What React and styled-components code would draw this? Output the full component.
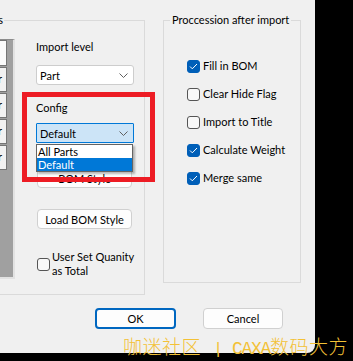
import React from 'react'
import styled, { createGlobalStyle } from 'styled-components'

const GlobalStyle = createGlobalStyle`
  html, body {
    margin: 0;
    padding: 0;
    background: #000;
  }
  body {
    font-family: Lato, "Liberation Sans", sans-serif;
    font-size: 11px;
    color: #000;
  }
`

const Screen = styled.div`
  position: relative;
  width: 353px;
  height: 361px;
  overflow: hidden;
  background: #000;
`

const Dialog = styled.div`
  position: relative;
  width: 315px;
  height: 353px;
  background: #f0f0f0;
  border-bottom-right-radius: 8px;
  overflow: hidden;
  display: flex;
  flex-direction: column;
`

const Panels = styled.div`
  display: flex;
  align-items: flex-start;
  padding-top: 12px;
  margin-left: -100px;
`

const GroupBox = styled.fieldset`
  box-sizing: border-box;
  width: ${p => p.$width}px;
  min-width: 0;
  margin: 0 0 0 ${p => p.$gap || 0}px;
  padding: 0;
  border: 1px solid #dadada;
`

const Legend = styled.legend`
  margin-left: ${p => p.$offset}px;
  padding: 0 ${p => p.$pad}px;
  line-height: 16px;
  white-space: nowrap;
`

/* fixed-width caption box, so only the tail of the left caption shows */
const LegendTail = styled.span`
  display: inline-block;
  width: ${p => p.$width}px;
  text-align: right;
`

const LeftBody = styled.div`
  display: flex;
  height: 266px;
`

const GridList = styled.div`
  box-sizing: border-box;
  width: 114px;
  height: 240px;
  margin-top: 11px;
  padding-right: 6px;
  background: #a0a0a0;
  border-top: 1px solid #8c8c8c;
  border-right: 2px solid #e2e2e2;
  border-bottom: 2px solid #e2e2e2;
  display: flex;
  flex-direction: column;
  align-items: flex-end;
`

const GridCell = styled.div`
  box-sizing: border-box;
  width: 60px;
  height: ${p => (p.$header ? 26 : 25)}px;
  margin-bottom: 1px;
  padding-right: 4px;
  background: ${p => (p.$header ? '#fbfbfb' : '#f2f2f2')};
  border: 1px solid #757575;
  line-height: 22px;
  text-align: right;
`

const Controls = styled.div`
  width: 98px;
  margin-left: 21px;
  display: flex;
  flex-direction: column;
`

const FieldLabel = styled.div`
  margin-top: ${p => p.$top}px;
  line-height: 16px;
`

const Select = styled.div`
  position: relative;
  box-sizing: border-box;
  height: 20px;
  margin-top: ${p => p.$top}px;
  padding: 0 5px 0 3px;
  display: flex;
  align-items: center;
  justify-content: space-between;
  background: ${p => (p.$active ? '#cce4f7' : '#fff')};
  border: 1px solid ${p => (p.$active ? '#0078d7' : '#cdcdcd')};
  border-radius: ${p => (p.$active ? 1 : 3)}px;
`

const DropList = styled.ul`
  position: absolute;
  top: 20px;
  left: -1px;
  z-index: 2;
  box-sizing: border-box;
  width: 97px;
  margin: 0;
  padding: 0;
  list-style: none;
  background: #fff;
  border: 1px solid #646464;
  box-shadow: 2px 2px 2px rgba(0, 0, 0, 0.28);
`

const DropItem = styled.li`
  height: 13px;
  padding-left: 1px;
  line-height: 13px;
  background: ${p => (p.$selected ? '#0078d7' : '#fff')};
  color: ${p => (p.$selected ? '#fff' : '#000')};
`

const PushButton = styled.button`
  box-sizing: border-box;
  width: ${p => p.$width}px;
  height: ${p => p.$height || 20}px;
  margin: ${p => p.$top || 0}px 0 0 ${p => p.$left || 0}px;
  padding: 0;
  font: inherit;
  color: #000;
  background: #fdfdfd;
  border: ${p => (p.$primary ? '2px solid #0067c0' : '1px solid #d0d0d0')};
  border-radius: 4px;
`

const CheckRow = styled.div`
  display: flex;
  align-items: center;
  gap: ${p => p.$gap || 3}px;
  height: ${p => p.$height || 28}px;
  margin: ${p => p.$top || 0}px 0 0 ${p => p.$left || 0}px;
  line-height: ${p => p.$lh || 16}px;
  white-space: nowrap;
`

const Box = styled.span`
  box-sizing: border-box;
  flex: none;
  width: 13px;
  height: 13px;
  display: flex;
  align-items: center;
  justify-content: center;
  border-radius: 3px;
  border: 1px solid ${p => (p.$checked ? '#005fb8' : '#555')};
  background: ${p => (p.$checked ? '#005fb8' : '#f8f8f8')};
`

const RightBody = styled.div`
  box-sizing: border-box;
  height: 254px;
  padding: 24px 0 0 23px;
  display: flex;
  flex-direction: column;
`

const Footer = styled.div`
  display: flex;
  gap: 27px;
  margin-top: 13px;
  padding-left: 95px;
`

const Callout = styled.div`
  position: absolute;
  left: 22px;
  top: 92px;
  z-index: 3;
  box-sizing: border-box;
  width: 133px;
  height: 90px;
  border: 5px solid #ed1c24;
  pointer-events: none;
`

const Watermark = styled.div`
  position: absolute;
  left: 123px;
  top: 336px;
  display: flex;
  align-items: baseline;
  color: #f3c136;
  line-height: 19px;
  white-space: nowrap;
  pointer-events: none;
`

const MarkCjk = styled.span`
  font-family: "Noto Sans CJK SC", sans-serif;
  font-weight: 300;
  font-size: 19px;
  letter-spacing: 0.5px;
`

const MarkBar = styled.span`
  width: 31px;
  padding-left: 12px;
  box-sizing: border-box;
  font-family: "Liberation Mono", monospace;
  font-size: 17px;
`

const MarkLatin = styled.span`
  font-family: "Liberation Mono", monospace;
  font-size: 18px;
  letter-spacing: -1.3px;
`

const Chevron = () => (
  <svg width="9" height="5" viewBox="0 0 9 5">
    <polyline points="0.5,0.5 4.5,4.5 8.5,0.5" fill="none" stroke="#606060" strokeWidth="1" />
  </svg>
)

const Check = ({ checked }) => (
  <Box $checked={checked}>
    {checked && (
      <svg width="9" height="7" viewBox="0 0 9 7">
        <polyline points="1,3.5 3.3,5.8 8,1" fill="none" stroke="#fff" strokeWidth="1" />
      </svg>
    )}
  </Box>
)

const options = [
  { label: 'Fill in BOM', checked: true },
  { label: 'Clear Hide Flag', checked: false },
  { label: 'Import to Title', checked: false },
  { label: 'Calculate Weight', checked: true },
  { label: 'Merge same', checked: true },
]

const App = () => (
  <Screen>
    <GlobalStyle />
    <Dialog>
      <Panels>
        <GroupBox $width={245}>
          <Legend $offset={10} $pad={1}>
            <LegendTail $width={91}>Settings</LegendTail>
          </Legend>
          <LeftBody>
            <GridList>
              <GridCell $header />
              <GridCell>Order</GridCell>
              <GridCell>Order</GridCell>
              <GridCell>Order</GridCell>
              <GridCell>Order</GridCell>
            </GridList>
            <Controls>
              <FieldLabel $top={11}>Import level</FieldLabel>
              <Select $top={10}>
                <span>Part</span>
                <Chevron />
              </Select>
              <FieldLabel $top={15}>Config</FieldLabel>
              <Select $top={7} $active>
                <span>Default</span>
                <Chevron />
                <DropList>
                  <DropItem>All Parts</DropItem>
                  <DropItem $selected>Default</DropItem>
                </DropList>
              </Select>
              <PushButton $width={95} $top={25} $left={1}>BOM Style</PushButton>
              <PushButton $width={95} $top={21} $left={1}>Load BOM Style</PushButton>
              <CheckRow $top={21} $left={1} $gap={2} $lh={14}>
                <Check checked={false} />
                <span>User Set Quanity<br />as Total</span>
              </CheckRow>
            </Controls>
          </LeftBody>
        </GroupBox>
        <GroupBox $width={138} $gap={18}>
          <Legend $offset={6} $pad={2}>Proccession after import</Legend>
          <RightBody>
            {options.map(o => (
              <CheckRow key={o.label}>
                <Check checked={o.checked} />
                <span>{o.label}</span>
              </CheckRow>
            ))}
          </RightBody>
        </GroupBox>
      </Panels>
      <Footer>
        <PushButton $width={81} $height={21} $primary>OK</PushButton>
        <PushButton $width={80} $height={21}>Cancel</PushButton>
      </Footer>
      <Callout />
    </Dialog>
    <Watermark>
      <MarkCjk>咖迷社区</MarkCjk>
      <MarkBar>|</MarkBar>
      <MarkLatin>CAXA</MarkLatin>
      <MarkCjk>数码大方</MarkCjk>
    </Watermark>
  </Screen>
)

export default App
